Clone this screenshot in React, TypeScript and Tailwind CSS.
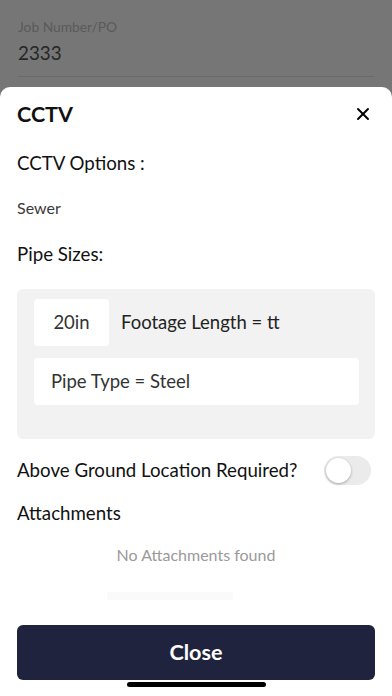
import { X } from 'lucide-react';

export default function App() {
  return (
    <div
      className="relative flex h-[696px] w-[392px] flex-col overflow-hidden bg-[#767676]"
      style={{ fontFamily: 'Lato, "Noto Sans", sans-serif' }}
    >
      {/* dimmed page behind the sheet */}
      <div className="px-[18px] pt-[18px]">
        <div className="text-[13.8px] leading-[18px] text-[#5a5a5a]">Job Number/PO</div>
        <div className="mt-[5px] text-[18.8px] leading-[24px] text-[#262626]">2333</div>
        <div className="mt-[11px] border-b border-[#6b6b6b]" />
      </div>

      {/* bottom sheet */}
      <div className="mt-[10px] flex flex-1 flex-col rounded-t-[10px] bg-white px-[17px]">
        <div className="flex items-center justify-between pt-[15px]">
          <h2 className="text-[21.5px] font-bold leading-[24px] text-[#111]">CCTV</h2>
          <X className="mr-[2px] h-[20px] w-[20px] text-black" strokeWidth={2.3} />
        </div>

        <div className="mt-[25px] text-[18.7px] leading-[24px] text-[#111]">CCTV Options :</div>
        <div className="mt-[23px] text-[16px] leading-[20px] text-[#3a3a3a]">Sewer</div>
        <div className="mt-[24px] text-[18.7px] leading-[24px] text-[#111]">Pipe Sizes:</div>

        <div className="mt-[23px] rounded-[6px] bg-[#f2f2f2] pb-[34px] pl-[17px] pr-[16px] pt-[10px]">
          <div className="flex items-center">
            <div className="flex h-[47px] w-[75px] items-center justify-center rounded-[4px] bg-white text-[18.5px] text-[#333]">
              20in
            </div>
            <span className="ml-[12px] text-[18.5px] text-[#222]">Footage Length = tt</span>
          </div>
          <div className="mt-[12px] flex h-[47px] items-center rounded-[4px] bg-white px-[17px] text-[18.5px] text-[#333]">
            Pipe Type = Steel
          </div>
        </div>

        <div className="mt-[16px] flex h-[30px] items-center justify-between">
          <span className="text-[18.7px] leading-[24px] text-[#111]">Above Ground Location Required?</span>
          <div className="mr-[4px] flex h-[29px] w-[47px] items-center rounded-full bg-[#ebebeb] p-[2px]">
            <div className="h-[25px] w-[25px] rounded-full bg-white shadow-[0_1px_3px_rgba(0,0,0,0.3)]" />
          </div>
        </div>

        <div className="mt-[16px] text-[18.7px] leading-[24px] text-[#111]">Attachments</div>
        <div className="mt-[20px] text-center text-[16px] leading-[20px] text-[#9a9a9a]">No Attachments found</div>

        <div className="ml-[90px] mt-[27px] h-[8px] w-[126px] bg-[#fafafa]" />

        <button className="mt-[25px] flex h-[55px] w-full items-center justify-center rounded-[6px] bg-[#1f233d] text-[21.6px] font-bold text-white">
          Close
        </button>
        <div className="mx-auto mt-[2px] h-[5px] w-[139px] rounded-full bg-black" />
      </div>
    </div>
  );
}
